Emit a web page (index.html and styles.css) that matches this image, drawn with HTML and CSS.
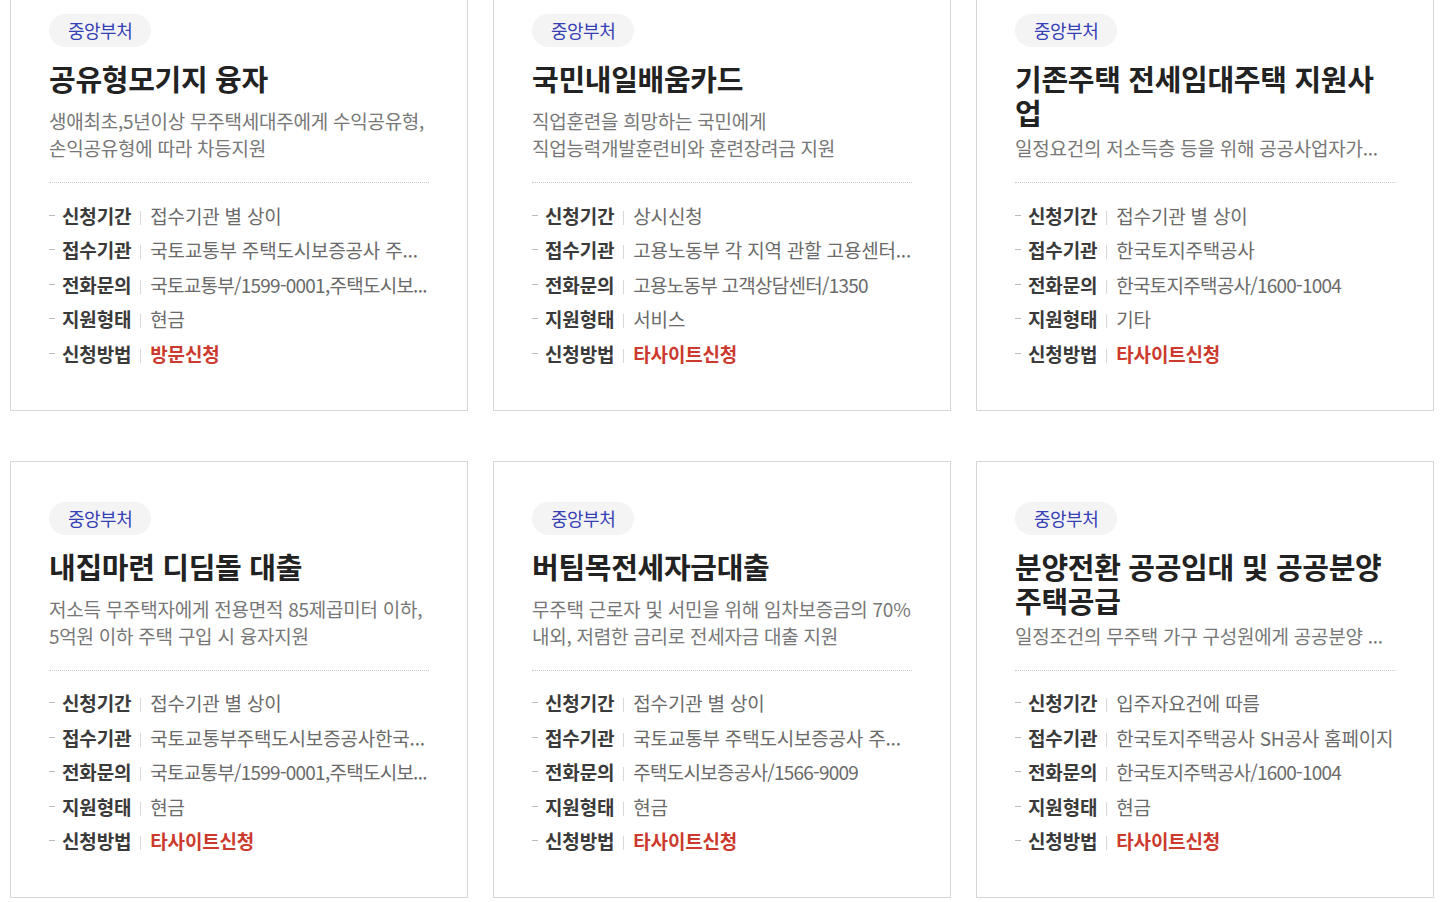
FILE: index.html
```html
<!DOCTYPE html>
<html lang="ko">
<head>
  <meta charset="UTF-8">
  <meta name="viewport" content="width=device-width, initial-scale=1.0">
  <title>정책 지원 목록</title>
  <link rel="stylesheet" href="styles.css">
</head>
<body>
  <ul class="list">
    <li class="card">
      <span class="tag">중앙부처</span>
      <div class="head">
        <h3 class="title">공유형모기지 융자</h3>
        <p class="desc">생애최초,5년이상 무주택세대주에게 수익공유형,<br>손익공유형에 따라 차등지원</p>
      </div>
      <ul class="info">
        <li><b>신청기간</b><span>접수기관 별 상이</span></li>
        <li><b>접수기관</b><span>국토교통부 주택도시보증공사 주...</span></li>
        <li><b>전화문의</b><span class="num">국토교통부/1599-0001,주택도시보...</span></li>
        <li><b>지원형태</b><span>현금</span></li>
        <li><b>신청방법</b><span class="red">방문신청</span></li>
      </ul>
    </li>
    <li class="card">
      <span class="tag">중앙부처</span>
      <div class="head">
        <h3 class="title">국민내일배움카드</h3>
        <p class="desc">직업훈련을 희망하는 국민에게<br>직업능력개발훈련비와 훈련장려금 지원</p>
      </div>
      <ul class="info">
        <li><b>신청기간</b><span>상시신청</span></li>
        <li><b>접수기관</b><span>고용노동부 각 지역 관할 고용센터...</span></li>
        <li><b>전화문의</b><span class="num">고용노동부 고객상담센터/1350</span></li>
        <li><b>지원형태</b><span>서비스</span></li>
        <li><b>신청방법</b><span class="red">타사이트신청</span></li>
      </ul>
    </li>
    <li class="card">
      <span class="tag">중앙부처</span>
      <div class="head">
        <h3 class="title">기존주택 전세임대주택 지원사업</h3>
        <p class="desc">일정요건의 저소득층 등을 위해 공공사업자가...</p>
      </div>
      <ul class="info">
        <li><b>신청기간</b><span>접수기관 별 상이</span></li>
        <li><b>접수기관</b><span>한국토지주택공사</span></li>
        <li><b>전화문의</b><span class="num">한국토지주택공사/1600-1004</span></li>
        <li><b>지원형태</b><span>기타</span></li>
        <li><b>신청방법</b><span class="red">타사이트신청</span></li>
      </ul>
    </li>
    <li class="card">
      <span class="tag">중앙부처</span>
      <div class="head">
        <h3 class="title">내집마련 디딤돌 대출</h3>
        <p class="desc">저소득 무주택자에게 전용면적 85제곱미터 이하,<br>5억원 이하 주택 구입 시 융자지원</p>
      </div>
      <ul class="info">
        <li><b>신청기간</b><span>접수기관 별 상이</span></li>
        <li><b>접수기관</b><span>국토교통부주택도시보증공사한국...</span></li>
        <li><b>전화문의</b><span class="num">국토교통부/1599-0001,주택도시보...</span></li>
        <li><b>지원형태</b><span>현금</span></li>
        <li><b>신청방법</b><span class="red">타사이트신청</span></li>
      </ul>
    </li>
    <li class="card">
      <span class="tag">중앙부처</span>
      <div class="head">
        <h3 class="title">버팀목전세자금대출</h3>
        <p class="desc">무주택 근로자 및 서민을 위해 임차보증금의 70%<br>내외, 저렴한 금리로 전세자금 대출 지원</p>
      </div>
      <ul class="info">
        <li><b>신청기간</b><span>접수기관 별 상이</span></li>
        <li><b>접수기관</b><span>국토교통부 주택도시보증공사 주...</span></li>
        <li><b>전화문의</b><span class="num">주택도시보증공사/1566-9009</span></li>
        <li><b>지원형태</b><span>현금</span></li>
        <li><b>신청방법</b><span class="red">타사이트신청</span></li>
      </ul>
    </li>
    <li class="card">
      <span class="tag">중앙부처</span>
      <div class="head">
        <h3 class="title">분양전환 공공임대 및 공공분양 주택공급</h3>
        <p class="desc">일정조건의 무주택 가구 구성원에게 공공분양 ...</p>
      </div>
      <ul class="info">
        <li><b>신청기간</b><span>입주자요건에 따름</span></li>
        <li><b>접수기관</b><span>한국토지주택공사 SH공사 홈페이지</span></li>
        <li><b>전화문의</b><span class="num">한국토지주택공사/1600-1004</span></li>
        <li><b>지원형태</b><span>현금</span></li>
        <li><b>신청방법</b><span class="red">타사이트신청</span></li>
      </ul>
    </li>
  </ul>
</body>
</html>
```

FILE: styles.css
```css
:root {
  --line: #d6d6d6;
  --text: #333;
  --gray: #777;
  --blue: #3640b5;
  --red: #cc3a2e;
}
* { box-sizing: border-box; margin: 0; padding: 0; }
body {
  font-family: 'Noto Sans CJK KR', 'Noto Sans', sans-serif;
  background: #fff;
  color: var(--text);
  overflow: hidden;
}
.list {
  list-style: none;
  display: grid;
  grid-template-columns: repeat(3, 458px);
  column-gap: 25px;
  row-gap: 50px;
  margin-top: -27px;
  padding-left: 10px;
}
.card {
  border: 1px solid var(--line);
  padding: 40px 38px 39px;
  display: flex;
  flex-direction: column;
  align-items: flex-start;
}
.tag {
  display: inline-block;
  height: 33px;
  line-height: 33px;
  padding: 0 19px;
  border-radius: 17px;
  background: #f4f4f5;
  color: var(--blue);
  font-size: 18px;
  letter-spacing: -0.5px;
}
.head {
  margin-top: 14px;
  height: 100px;
  width: 100%;
  display: flex;
  flex-direction: column;
}
.title {
  font-size: 29px;
  font-weight: 700;
  line-height: 34px;
  letter-spacing: -0.3px;
  color: #222;
}
.desc {
  margin-top: auto;
  font-size: 19px;
  line-height: 27px;
  letter-spacing: -0.25px;
  color: var(--gray);
  white-space: nowrap;
}
.info {
  list-style: none;
  width: 100%;
  margin-top: 21px;
  padding-top: 15px;
  border-top: 1px dotted #c8c8c8;
}
.info li {
  display: flex;
  align-items: center;
  height: 34.5px;
  font-size: 19px;
  letter-spacing: -0.2px;
  white-space: nowrap;
}
.info li::before {
  content: '';
  flex-shrink: 0;
  width: 6px;
  height: 1px;
  background: #bbb;
  margin-right: 7px;
}
.info b {
  flex-shrink: 0;
  font-weight: 700;
  color: #3a3a3a;
  letter-spacing: -0.15px;
}
.info b::after {
  content: '';
  display: inline-block;
  width: 1px;
  height: 14px;
  background: #d8d8d8;
  margin: 0 9px 0 9px;
  vertical-align: -1px;
}
.info span {
  color: #6a6a6a;
}
.info .num {
  letter-spacing: -0.75px;
}
.info .red {
  color: var(--red);
  font-weight: 700;
}
```
